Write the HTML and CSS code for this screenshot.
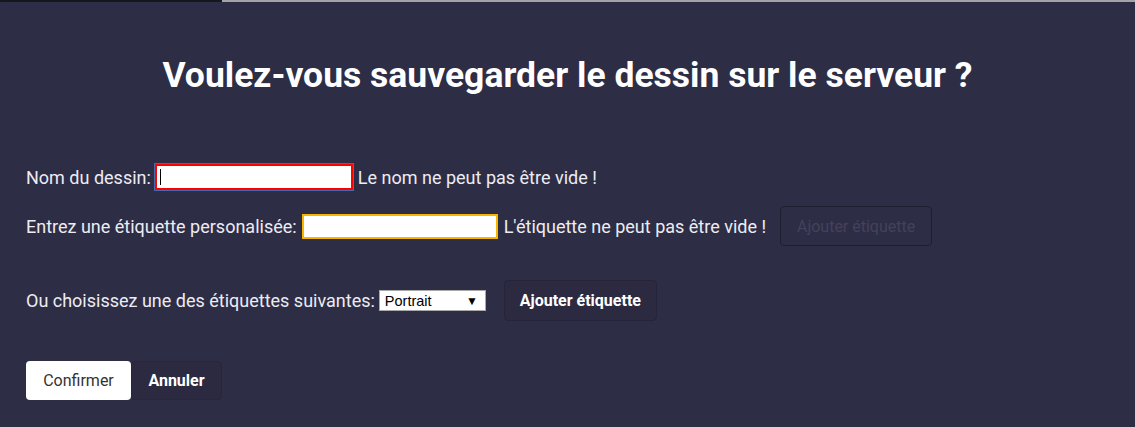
FILE: index.html
```html
<!DOCTYPE html>
<html lang="fr">
<head>
<meta charset="utf-8">
<link rel="stylesheet" href="styles.css">
</head>
<body>
<div class="topbar"><div class="topbar-dark"></div><div class="topbar-grey"></div></div>
<div class="dialog">
  <h1 class="title">Voulez-vous sauvegarder le dessin sur le serveur ?</h1>
  <div class="row row-name">
    <span class="label">Nom du dessin:</span>
    <span class="input input-error"><span class="caret"></span></span>
    <span class="msg">Le nom ne peut pas être vide !</span>
  </div>
  <div class="row row-tag">
    <span class="label">Entrez une étiquette personalisée:</span>
    <span class="input input-warn"></span>
    <span class="msg">L'étiquette ne peut pas être vide !</span>
    <button class="btn btn-disabled">Ajouter étiquette</button>
  </div>
  <div class="row row-choose">
    <span class="label">Ou choisissez une des étiquettes suivantes:</span>
    <span class="select"><span class="select-text">Portrait</span><span class="select-arrow">▼</span></span>
    <button class="btn btn-dark">Ajouter étiquette</button>
  </div>
  <div class="row row-actions">
    <button class="btn btn-confirm">Confirmer</button>
    <button class="btn btn-cancel">Annuler</button>
  </div>
</div>
</body>
</html>
```
FILE: styles.css
```css
html, body {
  margin: 0;
  padding: 0;
  height: 100%;
  background: #2e2d46;
}
body {
  font-family: Roboto, "Liberation Sans", sans-serif;
  color: #ececf2;
  display: flex;
  flex-direction: column;
}
.topbar {
  display: flex;
  height: 2px;
  flex: none;
}
.topbar-dark { width: 222px; background: #16161f; }
.topbar-grey { flex: 1; background: #a3a3a8; }
.dialog {
  flex: 1;
  background: #2e2d46;
  border-top-left-radius: 4px;
  padding: 0 26px;
}
.title {
  font-size: 35.5px;
  font-weight: 700;
  color: #ffffff;
  text-align: center;
  margin: 51px 0 0;
  line-height: 44px;
}
.row {
  display: flex;
  align-items: center;
  font-size: 18px;
}
.row-name { margin-top: 67px; height: 26px; }
.row-tag { margin-top: 16px; height: 40px; }
.row-choose { margin-top: 34px; height: 41px; }
.row-actions { margin-top: 40px; height: 39px; }
.input {
  display: inline-block;
  background: #fff;
  box-sizing: border-box;
  position: relative;
}
.input-error {
  width: 198px;
  height: 26px;
  margin: 0 5px 0 4px;
  border: 2px solid #ff0000;
  outline: 1px solid #4a6ab0;
}
.caret {
  position: absolute;
  left: 3px;
  top: 3px;
  width: 1px;
  height: 16px;
  background: #000;
}
.input-warn {
  width: 196px;
  height: 25px;
  margin: 0 6px 0 5px;
  border: 2px solid #f7b500;
}
.msg { white-space: nowrap; }
.btn {
  font-family: Roboto, "Liberation Sans", sans-serif;
  font-size: 16px;
  border-radius: 4px;
  box-sizing: border-box;
  cursor: pointer;
  padding: 0;
}
.btn-disabled {
  margin-left: 14px;
  width: 152px;
  height: 40px;
  background: transparent;
  border: 1px solid #1f1e30;
  color: #43425a;
}
.select {
  display: inline-flex;
  align-items: center;
  justify-content: space-between;
  width: 107px;
  height: 21px;
  box-sizing: border-box;
  background: #fff;
  border: 1px solid #a9a9a9;
  margin-left: 4px;
  padding: 0 7px 0 5px;
  font-family: "Liberation Sans", Arial, sans-serif;
  font-size: 14.5px;
  color: #000;
}
.select-arrow { font-size: 12px; }
.btn-dark {
  margin-left: 18px;
  width: 153px;
  height: 41px;
  background: #2b2a41;
  border: 1px solid #25243a;
  color: #fff;
  font-weight: 700;
}
.btn-confirm {
  width: 105px;
  height: 39px;
  background: #fff;
  border: none;
  color: #333;
}
.btn-cancel {
  width: 91px;
  height: 39px;
  background: #2b2a41;
  border: 1px solid #27263c;
  color: #fff;
  font-weight: 700;
}
```
